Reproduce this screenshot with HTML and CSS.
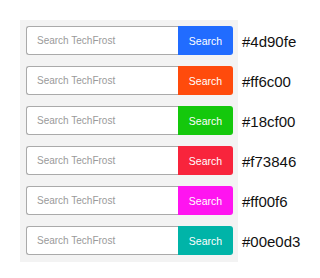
FILE: index.html
```html
<!DOCTYPE html>
<html>
<head>
  <title>Search Box Colors</title>
  <link rel="stylesheet" href="styles.css">
</head>
<body>

  <div class="wrap">
    <div class="panel">
      <form class="search">
        <input type="text" placeholder="Search TechFrost">
        <button type="button" class="btn blue">Search</button>
      </form>
      <form class="search">
        <input type="text" placeholder="Search TechFrost">
        <button type="button" class="btn orange">Search</button>
      </form>
      <form class="search">
        <input type="text" placeholder="Search TechFrost">
        <button type="button" class="btn green">Search</button>
      </form>
      <form class="search">
        <input type="text" placeholder="Search TechFrost">
        <button type="button" class="btn red">Search</button>
      </form>
      <form class="search">
        <input type="text" placeholder="Search TechFrost">
        <button type="button" class="btn pink">Search</button>
      </form>
      <form class="search">
        <input type="text" placeholder="Search TechFrost">
        <button type="button" class="btn teal">Search</button>
      </form>
    </div>

    <div class="codes">
      <span>#4d90fe</span>
      <span>#ff6c00</span>
      <span>#18cf00</span>
      <span>#f73846</span>
      <span>#ff00f6</span>
      <span>#00e0d3</span>
    </div>
  </div>

</body>
</html>
```

FILE: styles.css
```css
body {
  margin: 0;
  background: #fff;
  font-family: "Liberation Sans", Arial, sans-serif;
}

.wrap {
  display: flex;
  margin: 20px 0 0 20px;
}

.panel {
  width: 207px;
  background-color: #f3f3f3;
  padding: 6px 5px 7px 6px;
  display: flex;
  flex-direction: column;
  gap: 11px;
}

.search {
  display: flex;
  height: 29px;
  margin: 0;
}

.search input {
  width: 152px;
  box-sizing: border-box;
  height: 29px;
  border: 1px solid #aaa;
  border-right: none;
  border-radius: 3px 0 0 3px;
  background: #fff;
  padding: 0 0 0 10px;
  font-family: "Liberation Sans", Arial, sans-serif;
  font-size: 10px;
  color: #555;
  outline: none;
}

.search input::placeholder {
  color: #9a9a9a;
}

.btn {
  width: 55px;
  height: 29px;
  border: none;
  border-radius: 0 3px 3px 0;
  color: #fff;
  font-family: "Liberation Sans", Arial, sans-serif;
  font-size: 10.5px;
  padding: 0;
  cursor: pointer;
}

.blue { background-color: #216cff; }
.orange { background-color: #ff4b0c; }
.green { background-color: #14c80c; }
.red { background-color: #f8243c; }
.pink { background-color: #ff14f0; }
.teal { background-color: #00b4a8; }

.codes {
  display: flex;
  flex-direction: column;
  gap: 11px;
  padding-top: 7px;
  margin-left: 4px;
}

.codes span {
  height: 29px;
  line-height: 29px;
  font-size: 15px;
  color: #111;
}
```
